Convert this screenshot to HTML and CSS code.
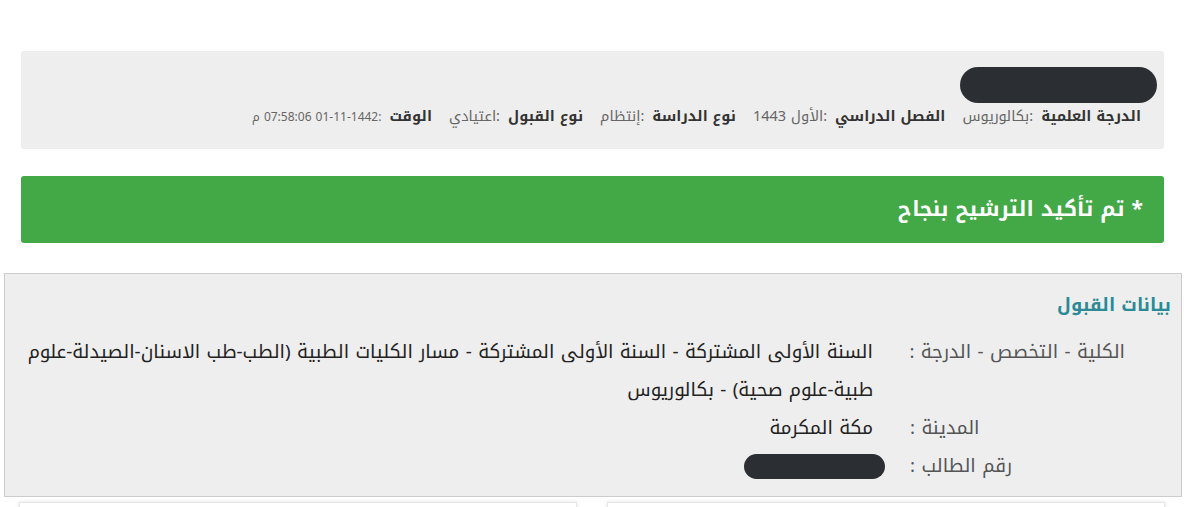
FILE: index.html
```html
<!DOCTYPE html>
<html lang="ar" dir="rtl">
<head>
<meta charset="utf-8">
<title>بيانات القبول</title>
<link rel="stylesheet" href="styles.css">
</head>
<body>
<div class="page">
  <section class="summary">
    <div class="name-row"><span class="redact redact-name"></span></div>
    <div class="info">
      <span class="item"><b class="lbl">الدرجة العلمية</b><span class="val">:بكالوريوس</span></span>
      <span class="item"><b class="lbl">الفصل الدراسي</b><span class="val">:الأول 1443</span></span>
      <span class="item"><b class="lbl">نوع الدراسة</b><span class="val">:إنتظام</span></span>
      <span class="item"><b class="lbl">نوع القبول</b><span class="val">:اعتيادي</span></span>
      <span class="item"><b class="lbl">الوقت</b><span class="val val-num">:01-11-1442 07:58:06 م</span></span>
    </div>
  </section>

  <div class="alert">* تم تأكيد الترشيح بنجاح</div>

  <section class="panel">
    <h3 class="panel-title">بيانات القبول</h3>
    <dl class="details">
      <dt>الكلية - التخصص - الدرجة :</dt>
      <dd>السنة الأولى المشتركة - السنة الأولى المشتركة - مسار الكليات الطبية (الطب-طب الاسنان-الصيدلة-علوم طبية-علوم صحية) - بكالوريوس</dd>
      <dt>المدينة :</dt>
      <dd>مكة المكرمة</dd>
      <dt>رقم الطالب :</dt>
      <dd><span class="redact redact-id"></span></dd>
    </dl>
  </section>

  <div class="cards">
    <div class="card"></div>
    <div class="card"></div>
  </div>
</div>
</body>
</html>
```

FILE: styles.css
```css
html, body {
  margin: 0;
  padding: 0;
  background: #ffffff;
}

body {
  font-family: "Noto Kufi Arabic", "Noto Sans Arabic", "DejaVu Sans", sans-serif;
  color: #333333;
  overflow: hidden;
}

.page {
  padding-top: 51px;
}

.summary {
  margin: 0 36px 0 21px;
  background: #eeeeee;
  border-radius: 3px;
  padding: 16px 7px 20px 10px;
}

.name-row {
  display: flex;
  height: 36px;
}

.redact {
  display: inline-block;
  background: #2b2f33;
  border-radius: 18px;
}

.redact-name {
  width: 197px;
  height: 36px;
}

.info {
  display: flex;
  align-items: baseline;
  gap: 17px;
  height: 26px;
  line-height: 26px;
  padding-right: 16px;
  white-space: nowrap;
}

.item {
  display: flex;
  align-items: baseline;
  gap: 8px;
}

.lbl {
  font-size: 14.5px;
  font-weight: bold;
  color: #333333;
}

.val {
  font-size: 14.5px;
  color: #666666;
}

.val-num {
  font-size: 12px;
}

.alert {
  margin: 27px 36px 0 21px;
  background: #43a846;
  border-radius: 3px;
  color: #ffffff;
  font-size: 21px;
  font-weight: bold;
  height: 67px;
  line-height: 67px;
  padding-right: 21px;
}

.panel {
  margin: 30px 18px 0 4px;
  background: #eeeeee;
  border: 1px solid #cccccc;
  padding: 16px 10px 11px 14px;
}

.panel-title {
  margin: 0 0 13px 0;
  font-size: 18px;
  line-height: 30px;
  font-weight: bold;
  color: #2b8a97;
}

.details {
  display: grid;
  grid-template-columns: 215px 1fr;
  column-gap: 37px;
  margin: 0 46px 0 0;
  font-size: 18.8px;
  line-height: 38px;
}

.details dt {
  text-align: left;
  white-space: nowrap;
  color: #555555;
}

.details dd {
  margin: 0;
  color: #222222;
}

.redact-id {
  width: 141px;
  height: 25px;
  border-radius: 13px;
  margin-right: -12px;
  vertical-align: middle;
}

.cards {
  display: grid;
  grid-template-columns: 1fr 1fr;
  column-gap: 30px;
  margin: 5px 35px 0 19px;
}

.card {
  height: 60px;
  background: #ffffff;
  border: 1px solid #e6e6e6;
  box-shadow: 0 0 4px rgba(0, 0, 0, 0.12);
}
```
